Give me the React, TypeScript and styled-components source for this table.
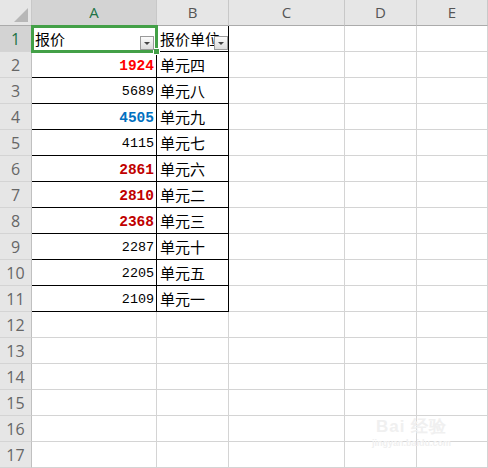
import React from "react";
import styled, { createGlobalStyle, css } from "styled-components";

const Global = createGlobalStyle`
  html, body { margin: 0; padding: 0; background: #fff; }
  body { width: 488px; height: 468px; overflow: hidden; }
`;

const Sheet = styled.div`
  position: relative;
  display: grid;
  grid-template-columns: 32px 125px 72px 116px 72px 1fr;
  grid-auto-rows: 26px;
  width: 488px;
  height: 468px;
  overflow: hidden;
  font-family: "Noto Sans CJK SC", "Noto Sans", sans-serif;
`;

const Corner = styled.div`
  position: relative;
  background: #e6e6e6;
  border-right: 1px solid #c8c8c8;
  border-bottom: 1px solid #ababab;
  box-sizing: border-box;
  &::after {
    content: "";
    position: absolute;
    right: 3px;
    bottom: 3px;
    width: 0;
    height: 0;
    border-left: 14px solid transparent;
    border-bottom: 14px solid #b7b7b7;
  }
`;

const ColHead = styled.div<{ $sel?: boolean }>`
  display: flex;
  align-items: center;
  justify-content: center;
  box-sizing: border-box;
  background: ${(p) => (p.$sel ? "#d3d3d3" : "#e6e6e6")};
  border-right: 1px solid #c8c8c8;
  border-bottom: 1px solid #ababab;
  font-family: "Open Sans", "Noto Sans", sans-serif;
  font-size: 15px;
  color: ${(p) => (p.$sel ? "#217346" : "#555")};
  padding-bottom: 1px;
`;

const RowHead = styled.div<{ $sel?: boolean }>`
  display: flex;
  align-items: center;
  justify-content: center;
  box-sizing: border-box;
  background: ${(p) => (p.$sel ? "#d3d3d3" : "#e6e6e6")};
  border-right: 1px solid #c0c0c0;
  border-bottom: 1px solid #d4d4d4;
  font-family: "Open Sans", "Noto Sans", sans-serif;
  font-size: 16px;
  color: ${(p) => (p.$sel ? "#217346" : "#666")};
`;

const Cell = styled.div<{ $table?: boolean; $num?: boolean }>`
  position: relative;
  display: flex;
  align-items: center;
  box-sizing: border-box;
  overflow: hidden;
  white-space: nowrap;
  border-right: 1px solid ${(p) => (p.$table ? "#000" : "#d4d4d4")};
  border-bottom: 1px solid ${(p) => (p.$table ? "#000" : "#d4d4d4")};
  font-size: 15px;
  color: #000;
  padding-left: 3px;
  ${(p) =>
    p.$num &&
    css`
      justify-content: flex-end;
      padding-left: 0;
      padding-right: 2px;
    `}
`;

const SelCell = styled(Cell)`
  overflow: visible;
`;

const Num = styled.span<{ $color?: string }>`
  font-family: "Liberation Mono", "DejaVu Sans Mono", monospace;
  font-size: ${(p) => (p.$color ? "14.5px" : "13.4px")};
  font-weight: ${(p) => (p.$color ? 700 : 400)};
  color: ${(p) => p.$color || "#000"};
  padding-top: 2px;
`;

const Selection = styled.div`
  position: absolute;
  left: -1px;
  top: -1px;
  right: -2px;
  bottom: -2px;
  border: 3px solid #43a047;
  pointer-events: none;
  z-index: 2;
  &::after {
    content: "";
    position: absolute;
    right: -5px;
    bottom: -5px;
    width: 5px;
    height: 5px;
    background: #43a047;
    border: 1px solid #fff;
  }
`;

const FilterBtn = styled.div<{ $right: number }>`
  position: absolute;
  right: ${(p) => p.$right}px;
  bottom: 1px;
  width: 14px;
  height: 14px;
  box-sizing: border-box;
  border: 1px solid #9a9a9a;
  background: linear-gradient(#fbfbfb, #dcdcdc);
  z-index: 3;
  &::after {
    content: "";
    position: absolute;
    left: 3px;
    top: 5px;
    border-left: 3.5px solid transparent;
    border-right: 3.5px solid transparent;
    border-top: 3.5px solid #444;
  }
`;

const Watermark = styled.div`
  position: absolute;
  left: 372px;
  top: 415px;
  display: flex;
  flex-direction: column;
  align-items: center;
  color: #f0f0f0;
  pointer-events: none;
  z-index: 4;
`;

const WmBig = styled.div`
  font-family: "Liberation Sans", sans-serif;
  font-size: 17px;
  font-weight: 700;
  letter-spacing: 1px;
`;

const WmSmall = styled.div`
  font-family: "Liberation Sans", sans-serif;
  font-size: 9px;
  font-weight: 700;
`;

const data: { v: string; c?: string; u: string }[] = [
  { v: "1924", c: "#ff0000", u: "单元四" },
  { v: "5689", u: "单元八" },
  { v: "4505", c: "#0070c0", u: "单元九" },
  { v: "4115", u: "单元七" },
  { v: "2861", c: "#c00000", u: "单元六" },
  { v: "2810", c: "#c00000", u: "单元二" },
  { v: "2368", c: "#c00000", u: "单元三" },
  { v: "2287", u: "单元十" },
  { v: "2205", u: "单元五" },
  { v: "2109", u: "单元一" },
];

const colKeys = ["A", "B", "C", "D", "E"];

export default function App() {
  const rows: React.ReactNode[] = [];
  for (let r = 1; r <= 17; r++) {
    rows.push(
      <RowHead key={`h${r}`} $sel={r === 1}>
        {r}
      </RowHead>
    );
    if (r === 1) {
      rows.push(
        <SelCell key="a1" $table>
          报价
          <Selection />
          <FilterBtn $right={2} />
        </SelCell>
      );
      rows.push(
        <Cell key="b1" $table>
          报价单位
          <FilterBtn $right={0} />
        </Cell>
      );
    } else if (r <= 11) {
      const d = data[r - 2];
      rows.push(
        <Cell key={`a${r}`} $table $num>
          <Num $color={d.c}>{d.v}</Num>
        </Cell>
      );
      rows.push(
        <Cell key={`b${r}`} $table>
          {d.u}
        </Cell>
      );
    } else {
      rows.push(<Cell key={`a${r}`} />);
      rows.push(<Cell key={`b${r}`} />);
    }
    rows.push(<Cell key={`c${r}`} />);
    rows.push(<Cell key={`d${r}`} />);
    rows.push(<Cell key={`e${r}`} />);
  }

  return (
    <>
      <Global />
      <Sheet>
        <Corner />
        {colKeys.map((k) => (
          <ColHead key={k} $sel={k === "A"}>
            {k}
          </ColHead>
        ))}
        {rows}
        <Watermark>
          <WmBig>Bai 经验</WmBig>
          <WmSmall>jingyan.baidu.com</WmSmall>
        </Watermark>
      </Sheet>
    </>
  );
}
